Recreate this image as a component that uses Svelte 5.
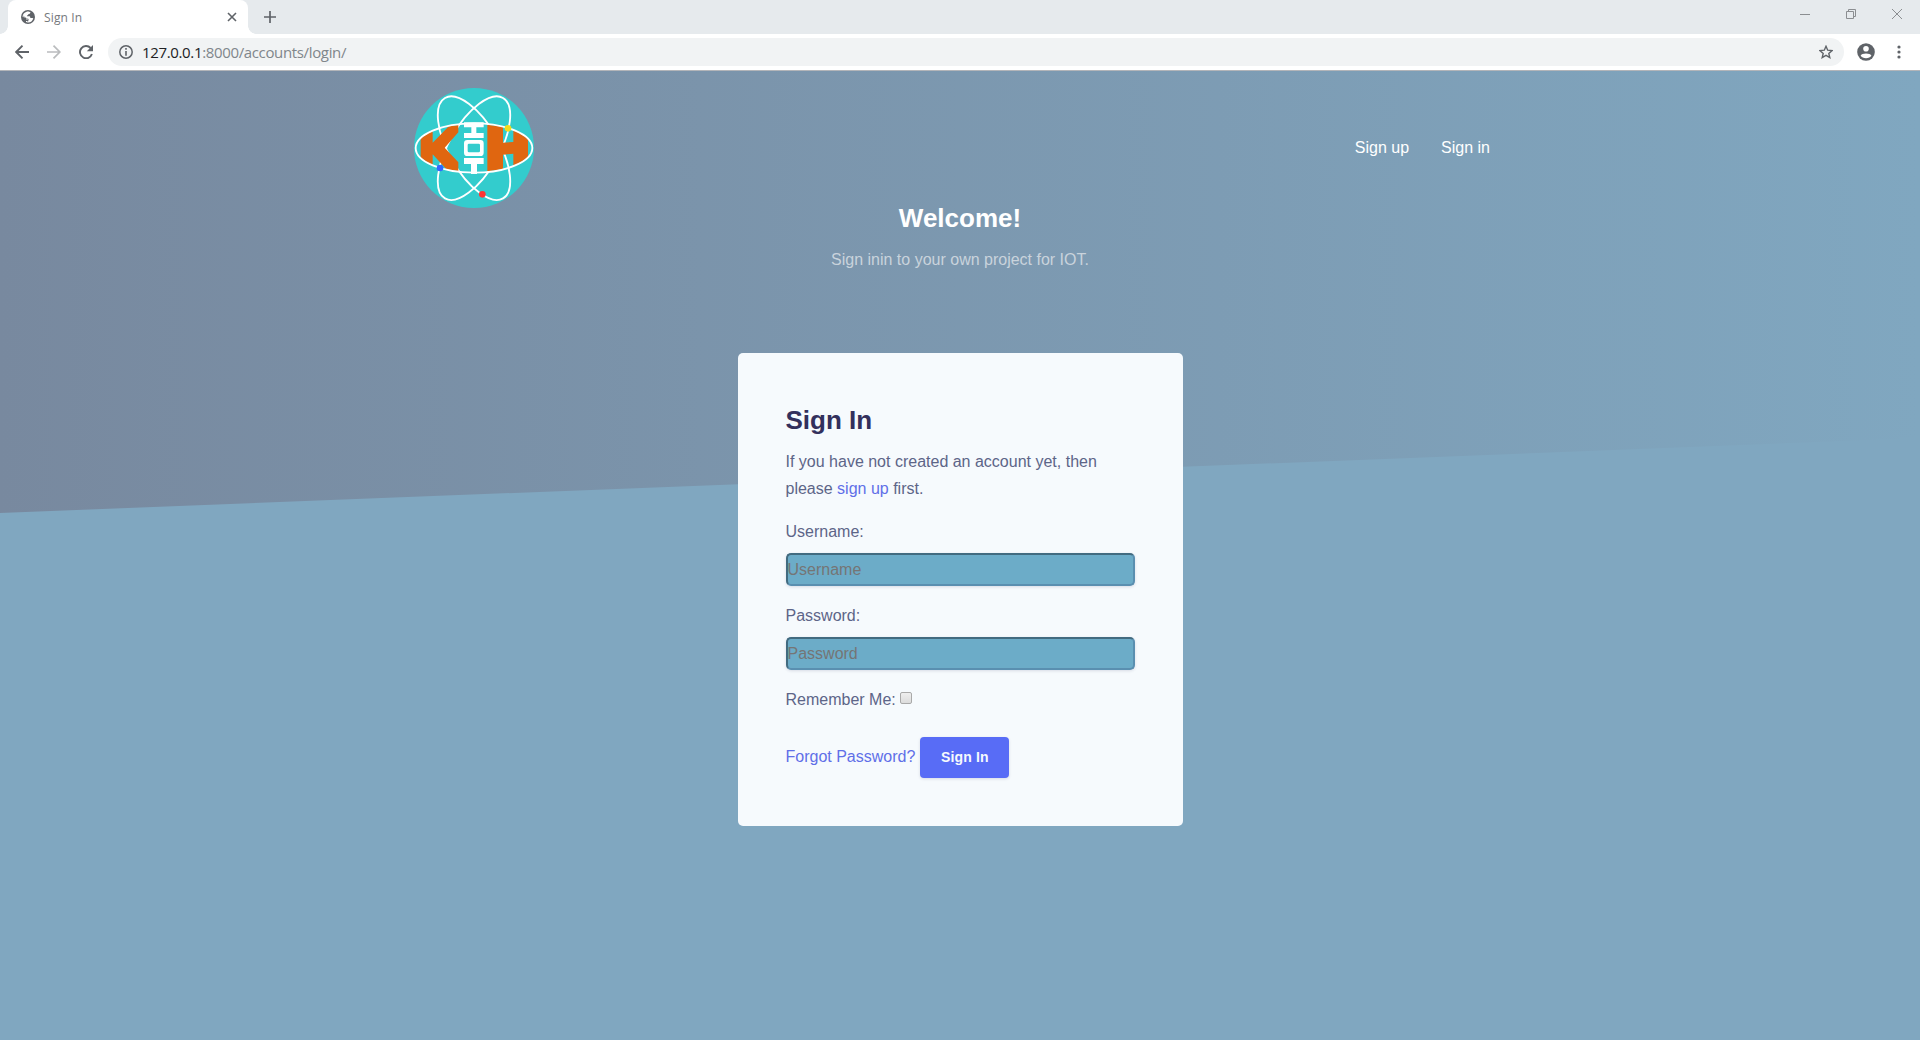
<script>
  const tabTitle = 'Sign In';
</script>

<div class="window">
  <div class="tabs">
    <div class="tab">
      <svg class="globe" width="14" height="14" viewBox="0 0 14 14"><circle cx="7" cy="7" r="7" fill="#5f6368" /><path d="M7.500 1.600 9.500 2.200C9.300 3.600 8.400 3.900 7.300 4.200 7 5.300 5.900 5.200 5.900 6.200H8.500C9.300 6.200 9.300 7.500 9.300 7.900H11.200L12.300 8.200C11.700 10.900 9.700 12.500 7 12.500L5 12.100V10.900H7.100V9.500H5.200L5 8 1.600 6.700C1.700 3.900 4.300 1.500 7.500 1.600Z" fill="#fff" /><path d="M1.500 5.500 5 8.200 7.600 9.300 6.500 12" fill="none" stroke="#5f6368" stroke-width=".5" /></svg>
      <span>{tabTitle}</span>
      <svg width="10" height="10" viewBox="0 0 10 10"><path d="m1 1 8 8M9 1 1 9" stroke="#5f6368" stroke-width="1.6" /></svg>
    </div>
    <svg class="plus" width="12" height="12" viewBox="0 0 12 12"><path d="M6 0v12M0 6h12" stroke="#5f6368" stroke-width="1.7" /></svg>
    <div class="controls">
      <svg width="10" height="10" viewBox="0 0 10 10"><path d="M0 5.5h10" /></svg>
      <svg width="10" height="10" viewBox="0 0 10 10"><path d="M.5 2.5h7v7h-7zM2.5 2.500v-2h7v7h-2" /></svg>
      <svg width="10" height="10" viewBox="0 0 10 10"><path d="m0 0 10 10M10 0 0 10" /></svg>
    </div>
  </div>

  <div class="toolbar">
    <svg width="14" height="14" viewBox="0 0 14 14"><path d="M14 7H1.500M7.500.7 1.200 7l6.300 6.300" fill="none" stroke="#5f6368" stroke-width="1.900" /></svg>
    <svg width="14" height="14" viewBox="0 0 14 14"><path d="M0 7h12.500M6.500.7 12.800 7l-6.300 6.300" fill="none" stroke="#babcbe" stroke-width="1.700" /></svg>
    <svg width="14" height="14" viewBox="0 0 14 14"><path d="M11.600 3A6.100 6.100 0 1 0 12.900 9" fill="none" stroke="#5f6368" stroke-width="1.900" /><path d="M14 0v6.200H7.800z" fill="#5f6368" /></svg>
    <div class="address">
      <svg width="14" height="14" viewBox="0 0 14 14"><circle cx="7" cy="7" r="6.200" fill="none" stroke="#5f6368" stroke-width="1.500" /><path d="M7 3.100v1.600M7 6v4.700" stroke="#5f6368" stroke-width="1.600" /></svg>
      <div class="url"><b>127.0.0.1</b>:8000/accounts/login/</div>
      <svg width="14" height="14" viewBox="0 0 14 14"><path d="m7 1.300 1.700 3.900 4.300.4-3.200 2.800 1 4.200L7 10.400l-3.800 2.200 1-4.200L1 5.600l4.300-.4z" fill="none" stroke="#5f6368" stroke-width="1.400" /></svg>
    </div>
    <svg class="avatar" width="18" height="18" viewBox="0 0 18 18"><circle cx="9" cy="9" r="8.800" fill="#5f6368" /><circle cx="9" cy="5.700" r="2.800" fill="#fff" /><path d="M3.600 12.600C4.500 9.800 13.500 9.800 14.400 12.600 12.600 16.100 5.400 16.100 3.600 12.600Z" fill="#fff" /></svg>
    <svg class="dots" width="4" height="14" viewBox="0 0 4 14"><g fill="#5f6368"><circle cx="2" cy="2" r="1.600" /><circle cx="2" cy="7" r="1.600" /><circle cx="2" cy="12" r="1.600" /></g></svg>
  </div>

  <div class="page">
    <svg class="slope" viewBox="0 0 1920 969" preserveAspectRatio="none">
      <defs><linearGradient id="sky"><stop offset="0" stop-color="#78899f" /><stop offset="1" stop-color="#80a7c0" /></linearGradient></defs>
      <path d="M0 0H1920V367L0 442Z" fill="url(#sky)" />
    </svg>
    <header>
      <svg class="logo" width="120" height="120" viewBox="42 39 360 360">
        <defs><clipPath id="orbit"><ellipse cx="222" cy="219" rx="173" ry="72" /></clipPath></defs>
        <circle cx="222" cy="219" r="180" fill="#33cccd" />
        <g fill="none" stroke="#fff" stroke-width="5.500">
          <ellipse cx="222" cy="219.500" rx="174" ry="75" transform="rotate(60 222 219.500)" />
          <ellipse cx="222" cy="219.500" rx="174" ry="75" transform="rotate(-60 222 219.500)" />
        </g>
        <g clip-path="url(#orbit)" fill="#e06610">
          <path d="M62 140H98V203L158 142H175V172L134 218 175 262V290H146L98 238V300H62Z" />
          <path d="M262 140H309V203L340 201V140H384V300H340V236L309 239V300H262Z" />
        </g>
        <g fill="#fff">
          <path d="M192 142H251V157H229V174H251V189H192V174H214V157H192Z" />
          <path fill-rule="evenodd" d="M202 195H241Q251 195 251 205V233Q251 243 241 243H202Q192 243 192 233V205Q192 195 202 195ZM207 206Q203 206 203 210V228Q203 232 207 232H236Q240 232 240 228V210Q240 206 236 206Z" />
          <path d="M192 249H251V267H231V297H213V267H192Z" />
        </g>
        <ellipse cx="222" cy="219" rx="175" ry="74" fill="none" stroke="#fff" stroke-width="5.500" />
        <circle cx="324" cy="160" r="10" fill="#f4dc1c" />
        <circle cx="120" cy="279" r="10" fill="#3366ff" />
        <circle cx="247" cy="358" r="10" fill="#ff3333" />
      </svg>
      <nav><a href="#up">Sign up</a><a href="#in">Sign in</a></nav>
    </header>
    <section class="hero">
      <h1>Welcome!</h1>
      <p>Sign inin to your own project for IOT.</p>
    </section>
    <form class="card">
      <h2>Sign In</h2>
      <p>If you have not created an account yet, then please <a href="#up">sign up</a> first.</p>
      <label for="user">Username:</label>
      <input id="user" class="field" placeholder="Username" />
      <label for="pass">Password:</label>
      <input id="pass" class="field" type="password" placeholder="Password" />
      <div class="remember">Remember Me:<span class="check"></span></div>
      <div class="actions"><a href="#forgot">Forgot Password?</a><button type="button">Sign In</button></div>
    </form>
  </div>
</div>

<style>
  :global(body) { margin: 0; }
  .window { width: 1920px; height: 1040px; display: flex; flex-direction: column; overflow: hidden; font: 16px/27px "Liberation Sans", Arial, sans-serif; }
  .window * { box-sizing: border-box; }
  svg { display: block; flex: none; }
  a { text-decoration: none; color: #5f6fe8; }
  h1, h2, p { margin: 0; }

  .tabs { height: 34px; flex: none; background: #e6eaed; display: flex; align-items: center; padding-left: 8px; }
  .tab { position: relative; width: 240px; height: 34px; background: #fff; border-radius: 8px 8px 0 0; display: flex; align-items: center; padding: 0 11px 0 13px; font: 12px/16px "Open Sans", "Noto Sans", sans-serif; color: #76797d; }
  .tab::before, .tab::after { content: ""; position: absolute; bottom: 0; width: 8px; height: 8px; }
  .tab::before { left: -8px; background: radial-gradient(circle at 0 0, transparent 7.500px, #fff 8px); }
  .tab::after { right: -8px; background: radial-gradient(circle at 100% 0, transparent 7.500px, #fff 8px); }
  .tab span { flex: 1; margin-left: 9px; padding-top: 1px; letter-spacing: .15px; }
  .plus { margin-left: 16px; }
  .controls { margin-left: auto; display: flex; gap: 36px; padding: 0 18px 6px 0; }
  .controls path { fill: none; stroke: #8b8e91; stroke-width: 1; }

  .toolbar { height: 37px; flex: none; border-bottom: 1px solid #b3b5b9; background: #fff; display: flex; align-items: center; padding: 0 19px 0 15px; gap: 18px; }
  .address { flex: 1; height: 28px; margin-left: -3px; border-radius: 14px; background: #f1f3f4; display: flex; align-items: center; padding: 0 11px; }
  .url { flex: 1; margin-left: 9px; font: 15px/20px "Open Sans", "Noto Sans", sans-serif; color: #80868b; letter-spacing: -0.350px; }
  .url b { font-weight: 400; color: #202124; }
  .avatar { margin-left: -5px; }
  .dots { margin-left: 4px; }

  .page { position: relative; flex: 1; background: #80a7c0; display: flex; flex-direction: column; align-items: center; }
  .slope { position: absolute; inset: 0; width: 100%; height: 100%; }
  header, .hero, .card { position: relative; }
  header { width: 1092px; height: 120px; margin-top: 17px; display: flex; align-items: center; justify-content: space-between; }
  nav { display: flex; gap: 32px; padding: 0 16px 2px 0; }
  nav a { color: #fff; }
  .hero { text-align: center; color: #fff; }
  h1 { font-size: 26px; line-height: 38px; margin-top: -9px; }
  .hero p { color: #c9d3dc; margin-top: 9px; }
  .card { width: 445px; height: 473px; margin-top: 80px; padding: 48px; border-radius: 5px; background: #f6fafd; color: #5d6588; display: flex; flex-direction: column; }
  h2 { font-size: 26px; line-height: 38px; color: #33305c; }
  .card p { margin: 9px 0 16px; }
  .field { height: 33px; flex: none; margin: 8px 0 16px; padding: 0; border: 2px solid; border-color: #426b80 #5a8fb0 #5a8fb0 #426b80; border-radius: 5px; background: #6cacc8; font: inherit; box-shadow: 0 1px 3px rgba(50, 50, 93, .15); }
  .field::placeholder { color: #757575; opacity: 1; }
  .remember { display: flex; align-items: center; }
  .check { width: 12px; height: 12px; margin: 0 0 3px 4px; border: 1px solid #a9a9a9; border-radius: 2px; background: linear-gradient(#eee, #dcdcdc); }
  .actions { display: flex; align-items: center; margin-top: 24px; gap: 5px; }
  .actions a { padding-bottom: 2px; }
  button { width: 89px; height: 41px; padding: 0 0 1px; border: 0; border-radius: 4px; background: #586cf6; color: #f6fafd; font: bold 14px/20px "Liberation Sans", Arial, sans-serif; letter-spacing: .15px; box-shadow: 0 1px 3px rgba(50, 50, 93, .15); }
</style>
